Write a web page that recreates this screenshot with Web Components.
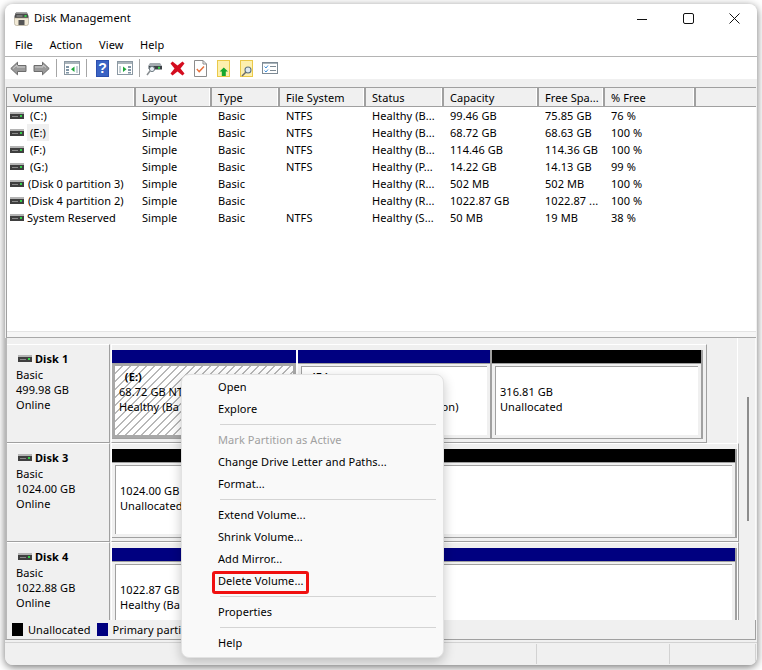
<!DOCTYPE html>
<html>
<head>
<meta charset="utf-8">
<title>Disk Management</title>
<style>
    html, body { margin: 0; height: 100%; background: #fff; overflow: hidden; }
    body { font: 11px "Noto Sans", "Open Sans", sans-serif; letter-spacing: 0.07px; color: #000; }
</style>
</head>
<body>

<dm-window>
    <dm-titlebar slot="chrome" heading="Disk Management"></dm-titlebar>
    <dm-menubar slot="chrome">
        <span>File</span><span>Action</span><span>View</span><span>Help</span>
    </dm-menubar>
    <dm-toolbar slot="chrome"></dm-toolbar>

    <dm-volume-list slot="chrome">
        <dm-volume-row name="(C:)" pad="6" values="Simple|Basic|NTFS|Healthy (B...|99.46 GB|75.85 GB|76 %"></dm-volume-row>
        <dm-volume-row name="(E:)" pad="6" selected values="Simple|Basic|NTFS|Healthy (B...|68.72 GB|68.63 GB|100 %"></dm-volume-row>
        <dm-volume-row name="(F:)" pad="6" values="Simple|Basic|NTFS|Healthy (B...|114.46 GB|114.36 GB|100 %"></dm-volume-row>
        <dm-volume-row name="(G:)" pad="6" values="Simple|Basic|NTFS|Healthy (P...|14.22 GB|14.13 GB|99 %"></dm-volume-row>
        <dm-volume-row name="(Disk 0 partition 3)" pad="4" values="Simple|Basic||Healthy (R...|502 MB|502 MB|100 %"></dm-volume-row>
        <dm-volume-row name="(Disk 4 partition 2)" pad="4" values="Simple|Basic||Healthy (R...|1022.87 GB|1022.87 ...|100 %"></dm-volume-row>
        <dm-volume-row name="System Reserved" pad="3" values="Simple|Basic|NTFS|Healthy (S...|50 MB|19 MB|38 %"></dm-volume-row>
    </dm-volume-list>

    <dm-disk-pane slot="chrome">
        <dm-disk-row name="Disk 1" kind="Basic" size="499.98 GB" state="Online" frame="596">
            <dm-partition width="186" color="#000080" selected>
                <b>&nbsp;&nbsp;(E:)</b><span>68.72 GB NT</span><span>Healthy (Ba</span>
            </dm-partition>
            <dm-partition width="194" color="#000080">
                <b>&nbsp;&nbsp;(F:)</b><span>114.46 GB NTFS</span><span>Healthy (Basic Data Partition)</span>
            </dm-partition>
            <dm-partition width="211" color="#000">
                <span>&nbsp;</span><span>316.81 GB</span><span>Unallocated</span>
            </dm-partition>
        </dm-disk-row>
        <dm-disk-row name="Disk 3" kind="Basic" size="1024.00 GB" state="Online" frame="628">
            <dm-partition width="625" color="#000">
                <span>&nbsp;</span><span>1024.00 GB</span><span>Unallocated</span>
            </dm-partition>
        </dm-disk-row>
        <dm-disk-row name="Disk 4" kind="Basic" size="1022.88 GB" state="Online" frame="628">
            <dm-partition width="625" color="#000080">
                <span>&nbsp;</span><span>1022.87 GB</span><span>Healthy (Ba</span>
            </dm-partition>
        </dm-disk-row>
    </dm-disk-pane>

    <dm-legend slot="chrome"></dm-legend>
    <dm-statusbar slot="chrome"></dm-statusbar>

    <dm-context-menu slot="overlay">
        <dm-menu-item>Open</dm-menu-item>
        <dm-menu-item>Explore</dm-menu-item>
        <dm-menu-sep></dm-menu-sep>
        <dm-menu-item disabled>Mark Partition as Active</dm-menu-item>
        <dm-menu-item>Change Drive Letter and Paths...</dm-menu-item>
        <dm-menu-item>Format...</dm-menu-item>
        <dm-menu-sep></dm-menu-sep>
        <dm-menu-item>Extend Volume...</dm-menu-item>
        <dm-menu-item>Shrink Volume...</dm-menu-item>
        <dm-menu-item>Add Mirror...</dm-menu-item>
        <dm-menu-item marked>Delete Volume...</dm-menu-item>
        <dm-menu-sep></dm-menu-sep>
        <dm-menu-item>Properties</dm-menu-item>
        <dm-menu-sep></dm-menu-sep>
        <dm-menu-item>Help</dm-menu-item>
    </dm-context-menu>
</dm-window>

<script>
const COLUMNS = '129px 76px 68px 86px 78px 95px 66px 91px 1fr';

// small base class, every element here just sets its shadow html once
class DmElement extends HTMLElement {
    constructor() {
        super();
        this.shadow = this.attachShadow({ mode: 'open' });
    }
    connectedCallback() {
        this.shadow.innerHTML = this.render();
    }
}

const DRIVE_SVG = `
    <svg width="14" height="7" viewBox="0 0 14 7" style="display:block;flex:none">
        <rect x="0" y="0" width="14" height="2" fill="#b4b4b4"/>
        <rect x="0" y="2" width="14" height="5" fill="#3f3f3f"/>
        <rect x="2" y="4" width="6" height="1" fill="#8a8a8a"/>
        <rect x="10" y="3" width="2" height="2" fill="#35d04a"/>
    </svg>`;

class DmWindow extends DmElement {
    render() {
        return `
            <style>
                :host {
                    display: block;
                    position: relative;
                    box-sizing: border-box;
                    width: 752px;
                    height: 661px;
                    margin: 4px 0 0 5px;
                    background: #f0f0f0;
                    border-radius: 8px;
                    box-shadow: 0 2px 9px rgba(0, 0, 0, 0.55);
                    overflow: hidden;
                }
                .chrome { display: flex; flex-direction: column; height: 100%; }
            </style>
            <div class="chrome"><slot name="chrome"></slot></div>
            <slot name="overlay"></slot>
        `;
    }
}

class DmTitlebar extends DmElement {
    render() {
        return `
            <style>
                :host {
                    display: flex;
                    align-items: center;
                    height: 29px;
                    flex: none;
                    background: #fff;
                    padding-left: 9px;
                }
                svg { display: block; }
                .name { margin: 0 0 2px 5px; font-size: 11.2px; white-space: nowrap; }
                .controls { display: flex; margin-left: auto; }
                .controls div { width: 46px; height: 29px; display: flex; align-items: center; justify-content: center; }
            </style>
            <svg width="15" height="14" viewBox="0 0 15 14">
                <path d="M2 0.5h11l1.5 3.5v2H0.5V4z" fill="#4a4a4a"/>
                <rect x="1" y="1" width="12" height="1" fill="#8e8e8e"/>
                <rect x="10.5" y="3" width="2" height="2" fill="#37d24c"/>
                <rect x="2.5" y="3.5" width="6" height="1" fill="#a8a8a8"/>
                <path d="M0.5 6h14v5.5q0 2-2 2h-10q-2 0-2-2z" fill="#f2ead6" stroke="#a89f8c" stroke-width="0.6"/>
                <rect x="4.5" y="8" width="6" height="5" fill="#555"/>
            </svg>
            <span class="name">${this.getAttribute('heading')}</span>
            <div class="controls">
                <div><svg width="10" height="10"><rect x="0" y="5" width="10" height="1" fill="#111"/></svg></div>
                <div><svg width="11" height="11"><rect x="0.5" y="0.5" width="10" height="10" rx="1.5" fill="none" stroke="#111"/></svg></div>
                <div><svg width="11" height="11"><path d="M0.5 0.5l10 10M10.5 0.5l-10 10" stroke="#111" fill="none"/></svg></div>
            </div>
        `;
    }
}

class DmMenubar extends DmElement {
    render() {
        return `
            <style>
                :host {
                    display: block;
                    flex: none;
                    height: 23px;
                    background: #fff;
                    border-bottom: 1px solid #b4b4b4;
                }
                div { display: flex; align-items: center; height: 23px; padding-left: 10px; gap: 16.6px; }
            </style>
            <div><slot></slot></div>
        `;
    }
}

class DmToolbar extends DmElement {
    render() {
        const sep = '<i></i>';
        const btn = (svg) => `<span>${svg}</span>`;
        return `
            <style>
                :host {
                    display: flex;
                    flex: none;
                    align-items: center;
                    height: 22px;
                    padding-left: 2px;
                    margin-bottom: 8px;
                    background: #fff;
                }
                span { width: 23px; height: 22px; display: flex; align-items: center; justify-content: center; }
                i { width: 7px; height: 22px; position: relative; }
                i::after { content: ""; position: absolute; left: 3px; top: 2px; bottom: 2px; width: 1px; background: #a6a6a6; }
                svg { display: block; }
            </style>
            ${btn(`<svg width="17" height="15" viewBox="0 0 17 15"><path d="M0.8 7.5L7.5 1.2V4.5H16V10.5H7.5V13.8Z" fill="#9a9a9a" stroke="#6d6d6d"/><path d="M3 7.5L7 4V6H15" fill="none" stroke="#cfcfcf"/></svg>`)}
            ${btn(`<svg width="17" height="15" viewBox="0 0 17 15"><path d="M16.2 7.5L9.5 1.2V4.5H1V10.5H9.5V13.8Z" fill="#9a9a9a" stroke="#6d6d6d"/><path d="M2 6H10V4L13 6.5" fill="none" stroke="#cfcfcf"/></svg>`)}
            ${sep}
            ${btn(`<svg width="16" height="14" viewBox="0 0 16 14"><rect x="0.5" y="0.5" width="15" height="13" fill="#fff" stroke="#8b98a2"/><rect x="1" y="1" width="14" height="2" fill="#aab4bb"/><rect x="2" y="5" width="3" height="2" fill="#7f95a5"/><rect x="2" y="8" width="3" height="2" fill="#7f95a5"/><rect x="2" y="11" width="3" height="1.5" fill="#7f95a5"/><rect x="12" y="5" width="2" height="7" fill="#c8d2d8"/><path d="M10.5 5.5V11L7 8.2Z" fill="#1fa83a"/></svg>`)}
            ${sep}
            <span style="margin-left:1px;margin-right:-1px"><svg width="13" height="17" viewBox="0 0 13 17"><rect width="13" height="17" fill="#2b4fae"/><rect x="1" y="1" width="11" height="15" fill="#3a63c4"/><text x="6.5" y="13" font-family="Liberation Sans" font-weight="bold" font-size="14" text-anchor="middle" fill="#fff">?</text></svg></span>
            ${btn(`<svg width="16" height="14" viewBox="0 0 16 14"><rect x="0.5" y="0.5" width="15" height="13" fill="#fff" stroke="#8b98a2"/><rect x="1" y="1" width="14" height="2" fill="#aab4bb"/><rect x="2" y="5" width="2" height="7" fill="#c8d2d8"/><path d="M6 5.5V11L9.5 8.2Z" fill="#1fa83a"/><rect x="11" y="5" width="3" height="2" fill="#7f95a5"/><rect x="11" y="8" width="3" height="2" fill="#7f95a5"/><rect x="11" y="11" width="3" height="1.5" fill="#7f95a5"/></svg>`)}
            ${sep}
            ${btn(`<svg width="17" height="15" viewBox="0 0 17 15"><path d="M4 2h10l2 3v3H2V5z" fill="#a4abb0"/><rect x="3" y="5" width="13" height="3.5" fill="#3c4246"/><rect x="12" y="5.8" width="2" height="2" fill="#37d24c"/><circle cx="6" cy="8" r="2.6" fill="#e6edf2" stroke="#6e7a82"/><path d="M4 10L1 14" stroke="#8a8f92" stroke-width="1.6"/></svg>`)}
            ${btn(`<svg width="15" height="15" viewBox="0 0 15 15"><path d="M2.5 0.5L7.5 4.5L12.5 0.5L14.5 2.5L10.5 7.5L14.5 12.5L12.5 14.5L7.5 10.5L2.5 14.5L0.5 12.5L4.5 7.5L0.5 2.5Z" fill="#d40d1f"/></svg>`)}
            ${btn(`<svg width="13" height="17" viewBox="0 0 13 17"><path d="M0.5 0.5H9L12.5 4V16.5H0.5Z" fill="#fff" stroke="#8c8c8c"/><path d="M9 0.5V4H12.5" fill="none" stroke="#8c8c8c"/><path d="M2.8 9L5.2 11.6L10 6.5" fill="none" stroke="#e8703a" stroke-width="1.4"/></svg>`)}
            ${btn(`<svg width="13" height="17" viewBox="0 0 13 17"><rect x="0.5" y="0.5" width="12" height="16" fill="#fdf0ae" stroke="#eac94a"/><path d="M6.8 7.5L11 11.5H8.8V16H4.8V11.5H2.6Z" fill="#14a82f"/></svg>`)}
            ${btn(`<svg width="13" height="17" viewBox="0 0 13 17"><rect x="0.5" y="0.5" width="12" height="16" fill="#fdf0ae" stroke="#eac94a"/><circle cx="8" cy="10" r="3" fill="#dfeaf2" stroke="#5f7482" stroke-width="1.1"/><path d="M5.8 12.2L2 16" stroke="#6b6b6b" stroke-width="1.5"/></svg>`)}
            ${btn(`<svg width="16" height="12" viewBox="0 0 16 12"><rect x="0.5" y="0.5" width="15" height="11" fill="#fff" stroke="#7d8a94"/><rect x="1" y="1" width="14" height="1" fill="#a9b4bb"/><path d="M2.5 4.5L4 6L6 3.5M2.5 8.5L4 10L6 7.5" fill="none" stroke="#3f8fd8"/><path d="M8 4.5H14M8 8.5H14" stroke="#7d8a94"/></svg>`)}
        `;
    }
}

class DmVolumeList extends DmElement {
    render() {
        const heads = ['Volume', 'Layout', 'Type', 'File System', 'Status', 'Capacity', 'Free Spa...', '% Free', ''];
        return `
            <style>
                :host {
                    display: block;
                    flex: none;
                    box-sizing: border-box;
                    height: 251px;
                    margin-left: 1px;
                    margin-right: 1px;
                    background: #f6f6f6;
                    border-top: 1px solid #a0a0a0;
                    border-left: 1px solid #a0a0a0;
                    border-bottom: 1px solid #a8a8a8;
                }
                .inner { height: 243px; background: #fff; border-bottom: 1px solid #e4e4e4; overflow: hidden; }
                .head {
                    display: grid;
                    grid-template-columns: ${COLUMNS};
                    height: 18px;
                    background: #f0f0f0;
                    border-bottom: 1px solid #a0a0a0;
                    box-sizing: content-box;
                }
                .head div {
                    padding-left: 6px;
                    line-height: 20px;
                    border-right: 2px solid #a0a0a0;
                    box-shadow: inset -1px 0 0 #fff;
                    white-space: nowrap;
                    overflow: hidden;
                }
                .head div:last-child { border-right: 0; box-shadow: none; }
            </style>
            <div class="inner">
                <div class="head">${heads.map(h => `<div>${h}</div>`).join('')}</div>
                <slot></slot>
            </div>
        `;
    }
}

class DmVolumeRow extends DmElement {
    render() {
        const values = this.getAttribute('values').split('|');
        const pad = this.getAttribute('pad');
        const sel = this.hasAttribute('selected') ? 'background:#f0f0f0;' : '';
        return `
            <style>
                :host {
                    display: grid;
                    grid-template-columns: ${COLUMNS};
                    height: 17px;
                    line-height: 17px;
                    white-space: nowrap;
                }
                .vol { display: flex; align-items: center; padding-left: 3px; }
                .vol span { margin-left: ${pad - 3}px; padding: 0 3px; }
                div { padding-left: 6px; overflow: hidden; }
            </style>
            <div class="vol">${DRIVE_SVG}<span style="${sel}">${this.getAttribute('name')}</span></div>
            ${values.map(v => `<div>${v}</div>`).join('')}
        `;
    }
}

class DmDiskPane extends DmElement {
    render() {
        return `
            <style>
                :host {
                    display: block;
                    flex: none;
                    position: relative;
                    height: 282px;
                    margin-left: 0;
                    border-left: 2px solid #b8b8b8;
                    overflow: hidden;
                }
                .rows { padding-top: 6px; width: 731px; border-right: 1px solid #fff; height: 100%; box-sizing: border-box; }
                .track { position: absolute; left: 740px; top: 59px; width: 2px; height: 124px; background: #8c8c8c; }
                .edge { position: absolute; right: 1px; top: 0; bottom: 0; width: 1px; background: #fafafa; }
            </style>
            <div class="rows"><slot></slot></div>
            <div class="track"></div>
            <div class="edge"></div>
        `;
    }
}

class DmDiskRow extends DmElement {
    render() {
        return `
            <style>
                :host { display: flex; height: 99px; box-sizing: border-box; }
                .label {
                    box-sizing: border-box;
                    flex: none;
                    width: 103px;
                    padding: 6px 0 0 9px;
                    border-top: 1px solid #fff;
                    border-right: 1px solid #a0a0a0;
                    border-bottom: 1px solid #a0a0a0;
                    line-height: 15px;
                }
                .name { display: flex; align-items: center; font-weight: bold; margin: 0 0 1px 2px; gap: 3px; height: 15px; }
                .frame {
                    box-sizing: border-box;
                    flex: none;
                    display: flex;
                    margin-left: 1px;
                    width: ${this.getAttribute('frame')}px;
                    padding: 5px 3px 3px 0;
                    border-top: 1px solid #fff;
                    border-left: 1px solid #fff;
                    border-right: 1px solid #a0a0a0;
                    border-bottom: 1px solid #a0a0a0;
                }
            </style>
            <div class="label">
                <div class="name">${DRIVE_SVG}<span>${this.getAttribute('name')}</span></div>
                <div>${this.getAttribute('kind')}</div>
                <div>${this.getAttribute('size')}</div>
                <div>${this.getAttribute('state')}</div>
            </div>
            <div class="frame"><slot></slot></div>
        `;
    }
}

class DmPartition extends DmElement {
    render() {
        const selected = this.hasAttribute('selected');
        const hatch = selected
            ? `background: repeating-linear-gradient(135deg, #fff 0 4.66px, #b8b8b8 4.66px 5.66px); border: 0; padding: 3px 0 0 4px;`
            : '';
        return `
            <style>
                :host {
                    display: flex;
                    flex-direction: column;
                    flex: none;
                    box-sizing: border-box;
                    width: ${this.getAttribute('width')}px;
                    border-right: 2px solid ${selected ? '#fff' : '#a0a0a0'};
                    border-bottom: 1px solid #a0a0a0;
                    white-space: nowrap;
                    overflow: hidden;
                }
                .bar { height: 13px; flex: none; background: ${this.getAttribute('color')}; border-bottom: 1px solid #a0a0a0; }
                .wrap {
                    flex: 1;
                    min-height: 0;
                    display: flex;
                    padding: 2px 3px 3px 3px;
                    background: ${selected ? '#a8a8a8' : '#f0f0f0'};
                }
                .box {
                    flex: 1;
                    min-width: 0;
                    box-sizing: border-box;
                    padding: 2px 0 0 4px;
                    background: #fff;
                    border-top: 1px solid #a0a0a0;
                    border-left: 1px solid #a0a0a0;
                    ${hatch}
                }
                ::slotted(*) { display: block; height: 15px; line-height: 15px; font-weight: normal; }
                ::slotted(b) { font-weight: bold; }
            </style>
            <div class="bar"></div>
            <div class="wrap"><div class="box"><slot></slot></div></div>
        `;
    }
}

class DmLegend extends DmElement {
    render() {
        return `
            <style>
                :host {
                    display: flex;
                    flex: none;
                    align-items: center;
                    box-sizing: border-box;
                    height: 20px;
                    margin-right: 1px;
                    padding-left: 5px;
                    background: #f0f0f0;
                    border-left: 2px solid #b8b8b8;
                    border-right: 1px solid #a0a0a0;
                    border-bottom: 1px solid #a0a0a0;
                    white-space: nowrap;
                }
                i { flex: none; width: 11px; height: 13px; margin-right: 5px; }
                span { margin-right: 6px; }
            </style>
            <i style="background:#000"></i><span>Unallocated</span>
            <i style="background:#000080"></i><span>Primary partition</span>
        `;
    }
}

class DmStatusbar extends DmElement {
    render() {
        return `
            <style>
                :host {
                    display: flex;
                    flex: 1;
                    margin-top: 2px;
                    background: #f0f0f0;
                    border-top: 1px solid #d2d2d2;
                }
                div { box-sizing: border-box; height: 20px; margin-top: 1px; border-right: 1px solid #d2d2d2; }
            </style>
            <div style="width:532px"></div>
            <div style="width:133px"></div>
            <div style="width:86px"></div>
        `;
    }
}

class DmContextMenu extends DmElement {
    render() {
        return `
            <style>
                :host {
                    display: block;
                    position: absolute;
                    left: 176px;
                    top: 370px;
                    box-sizing: border-box;
                    width: 263px;
                    height: 284px;
                    padding: 1px 0;
                    background: #f9f9f9;
                    border: 1px solid #e2e2e2;
                    border-radius: 8px;
                    box-shadow: 0 4px 12px rgba(0, 0, 0, 0.22);
                }
            </style>
            <slot></slot>
        `;
    }
}

class DmMenuItem extends DmElement {
    render() {
        const marked = this.hasAttribute('marked');
        return `
            <style>
                :host {
                    display: block;
                    position: relative;
                    height: 22px;
                    line-height: 22px;
                    padding-left: 36px;
                    white-space: nowrap;
                    color: ${this.hasAttribute('disabled') ? '#a0a0a0' : '#000'};
                }
                .mark {
                    position: absolute;
                    left: 30px;
                    top: 1px;
                    width: 97px;
                    height: 23px;
                    box-sizing: border-box;
                    border: 3px solid #f01010;
                    border-radius: 3px;
                }
            </style>
            <slot></slot>
            ${marked ? '<div class="mark"></div>' : ''}
        `;
    }
}

class DmMenuSep extends DmElement {
    render() {
        return `
            <style>
                :host { display: block; height: 9px; box-sizing: border-box; padding: 4px 7px 0 38px; }
                div { height: 1px; background: #d4d4d4; }
            </style>
            <div></div>
        `;
    }
}

customElements.define('dm-window', DmWindow);
customElements.define('dm-titlebar', DmTitlebar);
customElements.define('dm-menubar', DmMenubar);
customElements.define('dm-toolbar', DmToolbar);
customElements.define('dm-volume-list', DmVolumeList);
customElements.define('dm-volume-row', DmVolumeRow);
customElements.define('dm-disk-pane', DmDiskPane);
customElements.define('dm-disk-row', DmDiskRow);
customElements.define('dm-partition', DmPartition);
customElements.define('dm-legend', DmLegend);
customElements.define('dm-statusbar', DmStatusbar);
customElements.define('dm-context-menu', DmContextMenu);
customElements.define('dm-menu-item', DmMenuItem);
customElements.define('dm-menu-sep', DmMenuSep);
</script>
</body>
</html>
